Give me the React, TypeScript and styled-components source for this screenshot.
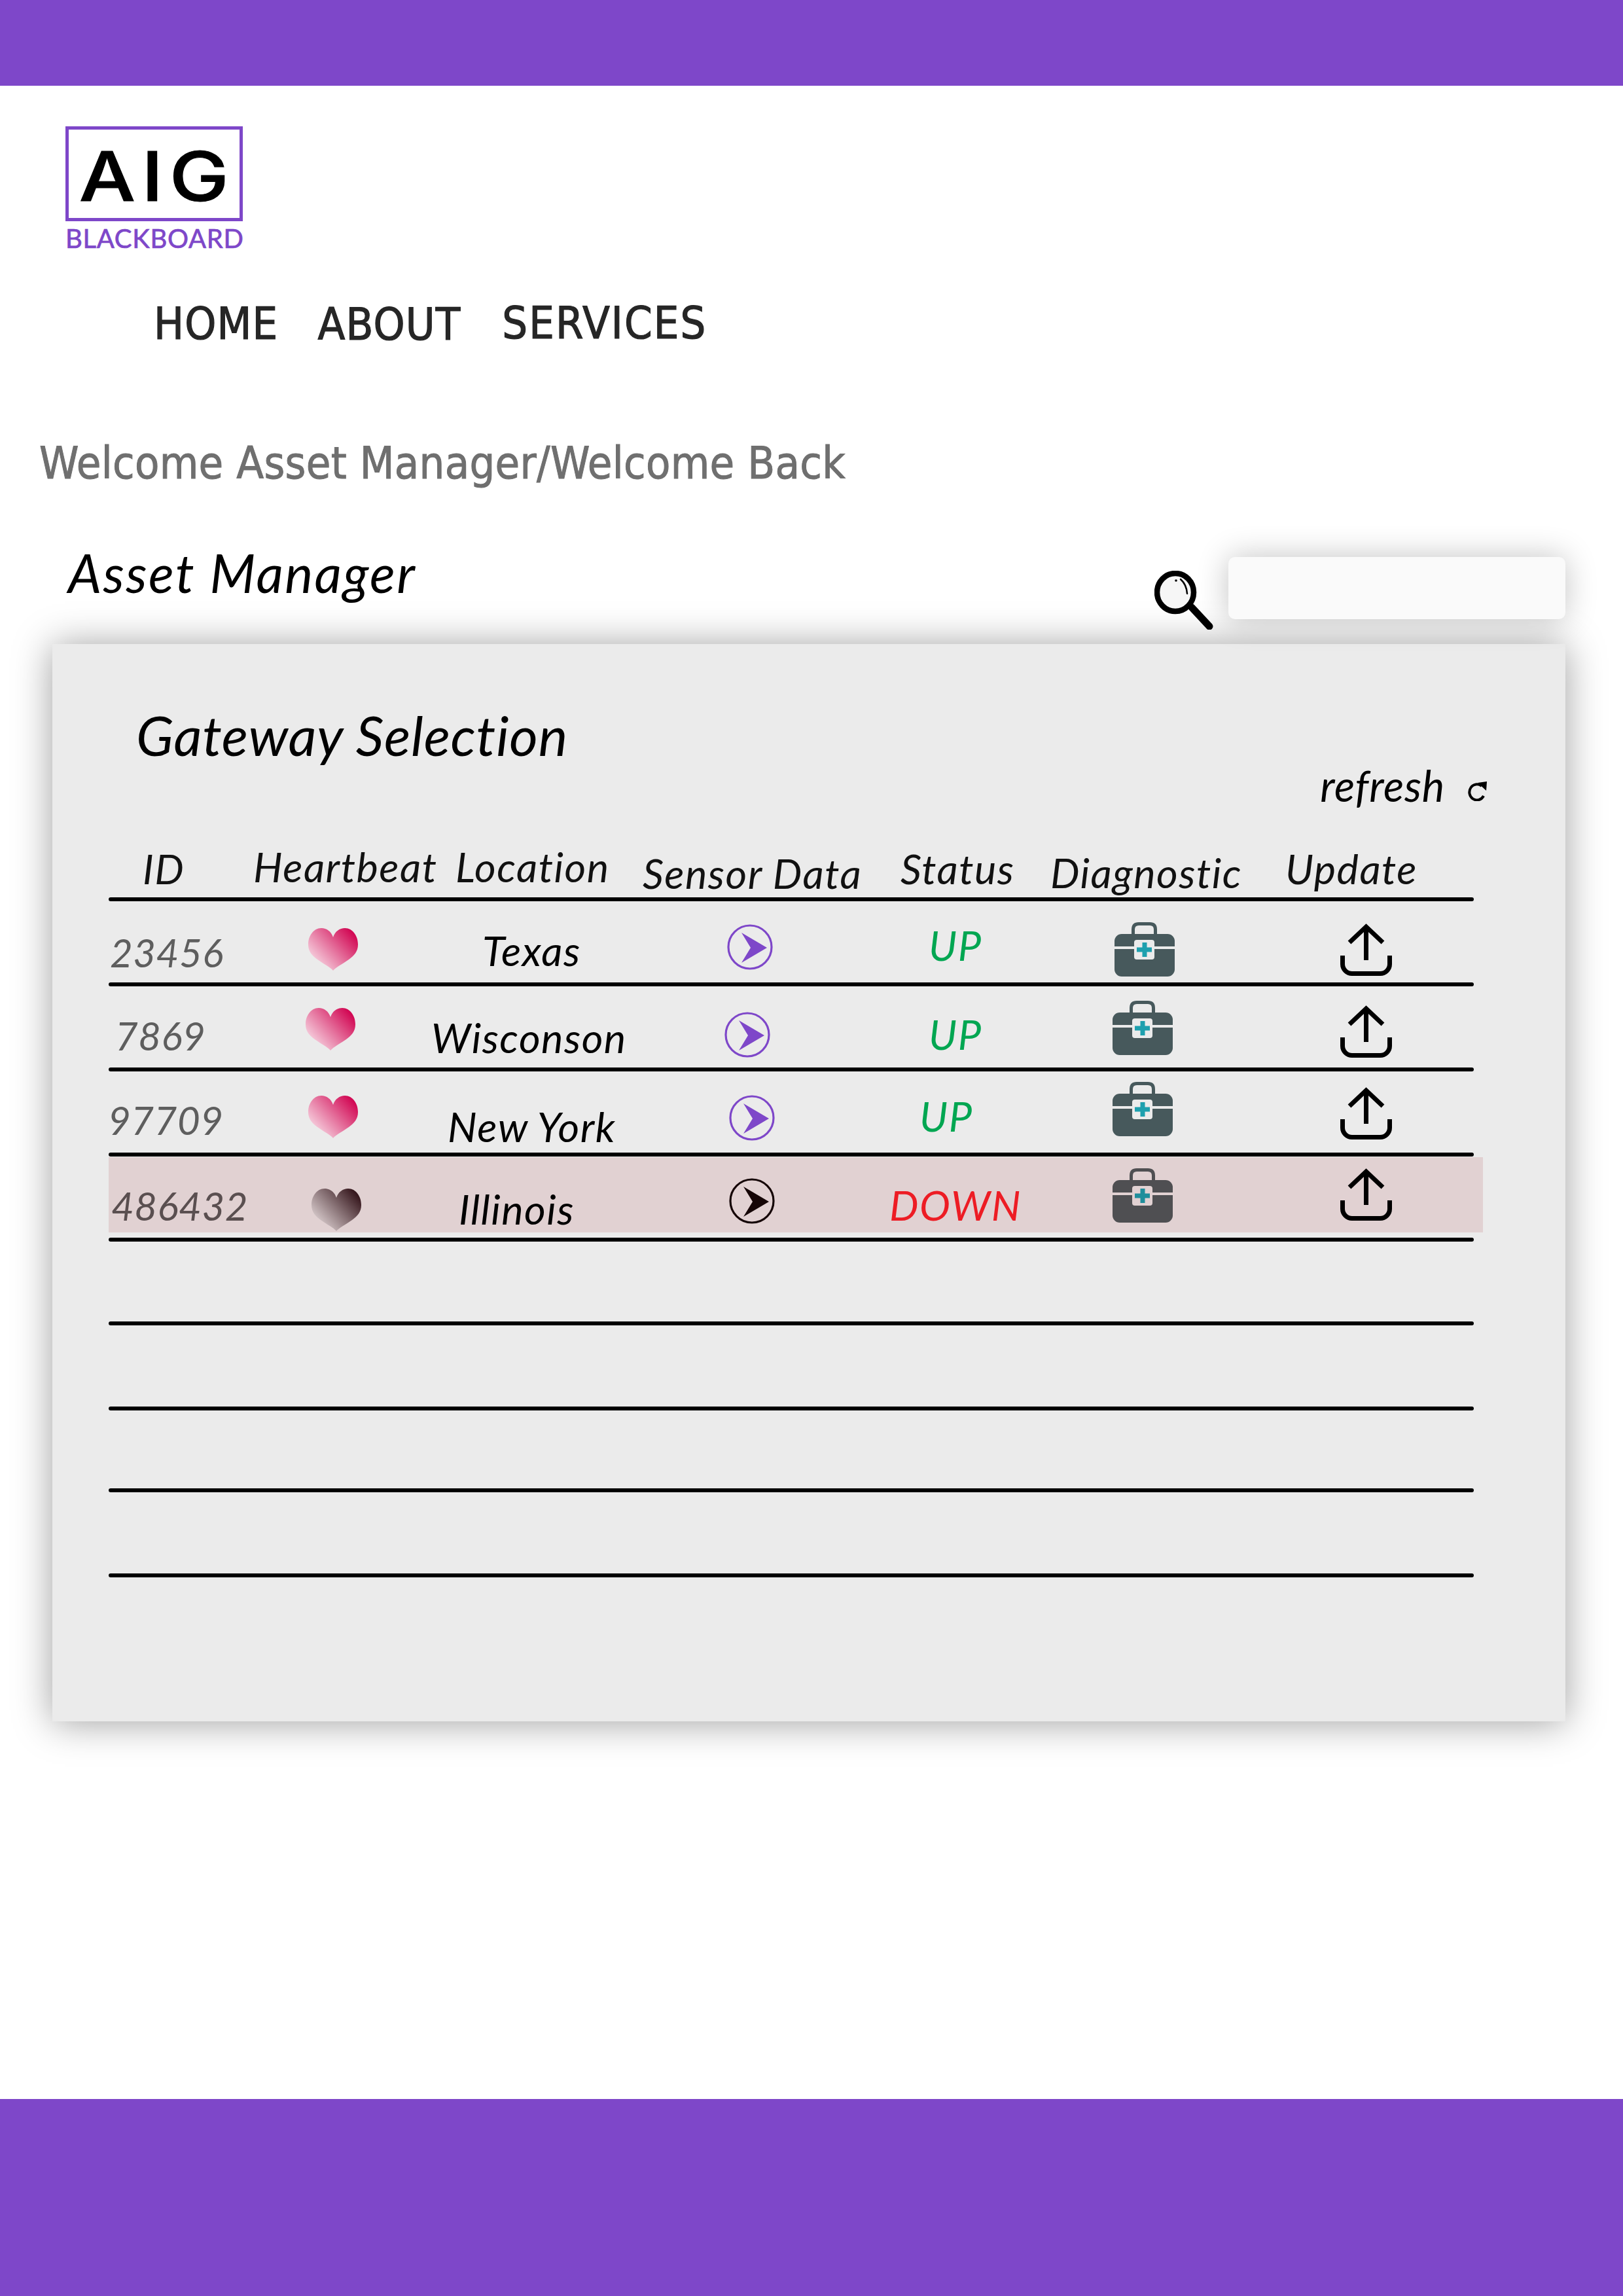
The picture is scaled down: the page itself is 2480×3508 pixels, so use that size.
import React from 'react';
import styled, {createGlobalStyle} from 'styled-components';

const PURPLE = '#7e47c9';
const BODY_FONT = '"Lato", "Noto Sans", sans-serif';
const NAV_FONT = '"DejaVu Sans Condensed", "DejaVu Sans", sans-serif';

const GlobalStyle = createGlobalStyle`
    html, body {
        margin: 0;
        padding: 0;
        background: #fff;
    }
`;

const Page = styled.div`
    width: 2480px;
    min-height: 3508px;
    display: flex;
    flex-direction: column;
    background: #fff;
`;

const Band = styled.div<{$height: number}>`
    height: ${(p) => p.$height}px;
    background: ${PURPLE};
    flex: none;
`;

const Main = styled.main`
    flex: 1;
`;

const Logo = styled.div`
    margin: 62px 0 0 100px;
    width: 271px;
`;

const LogoBox = styled.div`
    box-sizing: border-box;
    height: 145px;
    padding: 6px 0 0 8px;
    border: 5px solid ${PURPLE};
    display: flex;
    align-items: center;
    justify-content: center;
    font-family: "Inter", sans-serif;
    font-weight: 500;
    font-size: 104px;
    line-height: 1;
    letter-spacing: 8px;
    color: #000;
    -webkit-text-stroke: 1px #000;
`;

const LogoMark = styled.span`
    display: inline-block;
    transform: scaleX(1.17);
`;

const LogoName = styled.div`
    margin-top: 6px;
    font-family: ${BODY_FONT};
    font-weight: 400;
    font-size: 40px;
    line-height: 40px;
    letter-spacing: 0.7px;
    color: ${PURPLE};
    white-space: nowrap;
    -webkit-text-stroke: 0.7px ${PURPLE};
`;

const Nav = styled.nav`
    display: flex;
    align-items: flex-start;
    margin: 76px 0 0 235px;
    height: 70px;
`;

const NavItem = styled.a<{$gap: number; $drop: number; $track: number}>`
    margin-left: ${(p) => p.$gap}px;
    margin-top: ${(p) => p.$drop}px;
    font-family: ${NAV_FONT};
    font-size: 68px;
    line-height: 68px;
    letter-spacing: ${(p) => p.$track}px;
    color: #262626;
    -webkit-text-stroke: 1.2px #262626;
`;

const Welcome = styled.h2`
    margin: 144px 0 0 60px;
    font-family: ${NAV_FONT};
    font-weight: 400;
    font-size: 68px;
    line-height: 68px;
    letter-spacing: 0.3px;
    color: #6f6f6f;
    -webkit-text-stroke: 1px #6f6f6f;
`;

const ManagerBar = styled.div`
    display: flex;
    justify-content: space-between;
    align-items: flex-start;
    height: 147px;
    margin-top: 95px;
    padding: 0 88px 0 104px;
`;

const ManagerTitle = styled.h1`
    margin: 0;
    font-family: ${BODY_FONT};
    font-style: italic;
    font-weight: 400;
    font-size: 81px;
    line-height: 76px;
    letter-spacing: 2.4px;
    color: #000;
`;

const Search = styled.div`
    display: flex;
    align-items: flex-start;
    gap: 23px;
    position: relative;
    z-index: 1;
`;

const SearchIcon = styled.svg`
    margin-top: 35px;
    display: block;
`;

const SearchInput = styled.div`
    margin-top: 14px;
    width: 515px;
    height: 95px;
    background: #fafafa;
    border-radius: 10px;
    box-shadow: 0 0 48px rgba(0, 0, 0, 0.24);
`;

const Panel = styled.section`
    box-sizing: border-box;
    margin-left: 80px;
    width: 2312px;
    height: 1646px;
    padding: 99px 0 0 86px;
    background: #ebebeb;
    box-shadow: 0 2px 55px rgba(0, 0, 0, 0.38);
`;

const PanelTitle = styled.h3`
    margin: 0 0 0 42px;
    font-family: ${BODY_FONT};
    font-style: italic;
    font-weight: 400;
    font-size: 84px;
    line-height: 80px;
    letter-spacing: 0.8px;
    color: #000;
`;

const RefreshRow = styled.div`
    display: flex;
    justify-content: flex-end;
    align-items: flex-end;
    gap: 33px;
    height: 62px;
    margin-top: 6px;
    padding-right: 119px;
    font-family: ${BODY_FONT};
    font-style: italic;
    font-size: 65px;
    line-height: 62px;
    letter-spacing: 0.8px;
    color: #000;
`;

const RefreshIcon = styled.svg`
    display: block;
    margin-bottom: 7px;
`;

const Table = styled.div`
    width: 2086px;
    margin-top: 60px;
`;

const HeaderRow = styled.div`
    display: grid;
    grid-template-columns: 214px 310px 285px 395px 230px 360px 292px;
    align-items: end;
    height: 80px;
`;

const Row = styled.div<{$height: number; $flagged?: boolean}>`
    display: grid;
    grid-template-columns: 274px 200px 440px 260px 340px 340px 232px;
    align-items: end;
    height: ${(p) => p.$height}px;
    ${(p) => p.$flagged && `
        margin-right: -14px;
        background: linear-gradient(#e1d1d2, #e1d1d2) no-repeat 0 1px / 100% 115px;
    `}
`;

const Rule = styled.div`
    height: 6px;
    border-radius: 3px;
    background: #000;
    filter: blur(0.7px);
`;

const Cell = styled.div<{$left: number; $bottom: number}>`
    margin-left: ${(p) => p.$left}px;
    margin-bottom: ${(p) => p.$bottom}px;
    white-space: nowrap;
    font-family: ${BODY_FONT};
    font-style: italic;
    font-size: 63px;
    line-height: 60px;
    letter-spacing: 1.5px;
    color: #000;
    svg {
        display: block;
    }
`;

const HeaderText = styled.span`
    color: #111;
`;

const IdText = styled.span<{$flagged?: boolean}>`
    color: ${(p) => (p.$flagged ? '#5a4f50' : '#5e5e5e')};
    font-size: 60px;
    letter-spacing: 0.5px;
`;

const StatusText = styled.span<{$down?: boolean}>`
    color: ${(p) => (p.$down ? '#ed1c24' : '#00a651')};
`;

const Heart = ({id, dark}: {id: string; dark?: boolean}) => (
    <svg width="76" height="65" viewBox="0 0 76 65">
        <defs>
            <linearGradient id={id} x1="0.1" y1="0.85" x2="0.95" y2="0.2">
                <stop offset="0" stopColor={dark ? '#e0d4d5' : '#f8dbe6'} />
                <stop offset="1" stopColor={dark ? '#38191f' : '#d20a55'} />
            </linearGradient>
        </defs>
        <path
            fill={`url(#${id})`}
            d="M38 14 C35 5 28 0 20 0 C8 0 0 12 0 25 C0 36 6 42 14 48 C24 55 34 60 38 65 C42 60 52 55 62 48 C70 42 76 36 76 25 C76 12 68 0 56 0 C48 0 41 5 38 14 Z"
        />
    </svg>
);

const SensorIcon = ({color}: {color: string}) => (
    <svg width="70" height="70" viewBox="0 0 70 70">
        <circle cx="35" cy="35" r="33" fill="none" stroke={color} strokeWidth="3.2" />
        <polygon fill={color} points="22,13 61,36 22,59 36,36" />
    </svg>
);

const KitIcon = ({dark}: {dark?: boolean}) => {
    const body = dark ? '#4f4f52' : '#47595c';
    const inset = dark ? '#e1d1d2' : '#ebebeb';
    const cross = dark ? '#1f8e9b' : '#1ea0ae';
    return (
        <svg width="92" height="83" viewBox="0 0 92 83">
            <path d="M28.5 20 V11 Q28.5 2.5 37 2.5 H54 Q62.500 2.5 62.500 11 V20" fill="none" stroke={body} strokeWidth="5" />
            <rect x="0" y="18" width="92" height="65" rx="11" fill={body} />
            <rect x="0" y="37" width="92" height="4" fill={inset} />
            <rect x="30" y="27" width="31" height="30" rx="4" fill={inset} />
            <path d="M34 38.500 H42.500 V31 H49.500 V38.500 H57 V45.500 H49.500 V53 H42.500 V45.500 H34 Z" fill={cross} />
        </svg>
    );
};

const UploadIcon = () => (
    <svg width="79" height="80" viewBox="0 0 79 80" fill="none" stroke="#000" strokeWidth="7">
        <path d="M39.500 8 V56" />
        <path d="M14 29 L39.500 5 L65 29" />
        <path d="M3.500 49 V62 A14.500 14.500 0 0 0 18 76.500 H61 A14.500 14.500 0 0 0 75.500 62 V49" />
    </svg>
);

type Gateway = {
    id: string;
    location: string;
    status: string;
    height: number;
    ml: number[];
    mb: number[];
};

const gateways: Gateway[] = [
    {id: '23456', location: 'Texas', status: 'UP', height: 124, ml: [2, 31, 97, 31, 79, 23, 28], mb: [16, 18, 19, 19, 27, 9, 10]},
    {id: '7869', location: 'Wisconson', status: 'UP', height: 124, ml: [10, 27, 19, 27, 79, 20, 28], mb: [19, 26, 16, 15, 21, 19, 15]},
    {id: '97709', location: 'New York', status: 'UP', height: 124, ml: [-1, 31, 44, 34, 65, 20, 28], mb: [20, 22, 10, 18, 26, 25, 20]},
    {id: '486432', location: 'Illinois', status: 'DOWN', height: 124, ml: [4, 36, 61, 34, 19, 20, 28], mb: [19, 10, 14, 21, 20, 23, 26]},
];

const headers: [string, number, number][] = [
    ['ID', 52, 14],
    ['Heartbeat', 7, 17],
    ['Location', 6, 17],
    ['Sensor Data', 7, 7],
    ['Status', 6, 14],
    ['Diagnostic', 5, 8],
    ['Update', 4, 14],
];

const emptyRowHeights = [122, 124, 119, 124];

export default function App() {
    return (
        <Page>
            <GlobalStyle />
            <Band $height={131} />
            <Main>
                <Logo>
                    <LogoBox><LogoMark>AIG</LogoMark></LogoBox>
                    <LogoName>BLACKBOARD</LogoName>
                </Logo>
                <Nav>
                    <NavItem $gap={0} $drop={1} $track={1.2}>HOME</NavItem>
                    <NavItem $gap={60} $drop={2} $track={1.2}>ABOUT</NavItem>
                    <NavItem $gap={63} $drop={0} $track={2.1}>SERVICES</NavItem>
                </Nav>
                <Welcome>Welcome Asset Manager/Welcome Back</Welcome>
                <ManagerBar>
                    <ManagerTitle>Asset Manager</ManagerTitle>
                    <Search>
                        <SearchIcon width="90" height="90" viewBox="0 0 90 90">
                            <ellipse cx="32" cy="33" rx="28" ry="29" fill="#f6f6f6" stroke="#000" strokeWidth="8.500" />
                            <path d="M57 56 L84 85" stroke="#000" strokeWidth="11" strokeLinecap="round" />
                            <path d="M40 13 Q49 21 50 35" fill="none" stroke="#000" strokeWidth="2.500" strokeLinecap="round" />
                            <circle cx="33" cy="15" r="1.800" fill="#000" />
                        </SearchIcon>
                        <SearchInput />
                    </Search>
                </ManagerBar>
                <Panel>
                    <PanelTitle>Gateway Selection</PanelTitle>
                    <RefreshRow>
                        <span>refresh</span>
                        <RefreshIcon width="32" height="31" viewBox="0 0 32 31">
                            <path d="M26 23 A11.500 12 0 1 1 23 8" fill="none" stroke="#000" strokeWidth="4" />
                            <polygon points="17,3 31,1 30,15" fill="#000" />
                        </RefreshIcon>
                    </RefreshRow>
                    <Table>
                        <HeaderRow>
                            {headers.map(([label, left, bottom]) => (
                                <Cell key={label} $left={left} $bottom={bottom}>
                                    <HeaderText>{label}</HeaderText>
                                </Cell>
                            ))}
                        </HeaderRow>
                        <Rule />
                        {gateways.map((g, i) => {
                            const down = g.status === 'DOWN';
                            return (
                                <React.Fragment key={g.id}>
                                    <Row $height={g.height} $flagged={down}>
                                        <Cell $left={g.ml[0]} $bottom={g.mb[0]}><IdText $flagged={down}>{g.id}</IdText></Cell>
                                        <Cell $left={g.ml[1]} $bottom={g.mb[1]}><Heart id={`heart-${i}`} dark={down} /></Cell>
                                        <Cell $left={g.ml[2]} $bottom={g.mb[2]}>{g.location}</Cell>
                                        <Cell $left={g.ml[3]} $bottom={g.mb[3]}><SensorIcon color={down ? '#150506' : PURPLE} /></Cell>
                                        <Cell $left={g.ml[4]} $bottom={g.mb[4]}><StatusText $down={down}>{g.status}</StatusText></Cell>
                                        <Cell $left={g.ml[5]} $bottom={g.mb[5]}><KitIcon dark={down} /></Cell>
                                        <Cell $left={g.ml[6]} $bottom={g.mb[6]}><UploadIcon /></Cell>
                                    </Row>
                                    <Rule />
                                </React.Fragment>
                            );
                        })}
                        {emptyRowHeights.map((h, i) => (
                            <React.Fragment key={i}>
                                <Row $height={h} />
                                <Rule />
                            </React.Fragment>
                        ))}
                    </Table>
                </Panel>
            </Main>
            <Band $height={301} />
        </Page>
    );
}
